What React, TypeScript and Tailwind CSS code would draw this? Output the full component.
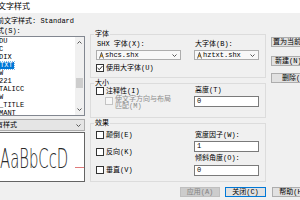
import React from 'react';

const styleNames = ['DU', 'C', 'DIX', 'TXT', 'W', '221', 'TALICC', 'W', '_TITLE', 'MANT'];

const Chevron = ({ up }: { up?: boolean }) => (
    <svg width="5" height="3" viewBox="0 0 5 3" className="block">
        <path d={up ? 'M0.5 2.5 L2.5 0.5 L4.5 2.5' : 'M0.5 0.5 L2.5 2.5 L4.5 0.5'} stroke="#555" fill="none" strokeWidth="1" />
    </svg>
);

// small SHX font mark shown in the font combo boxes
const ShxIcon = () => (
    <svg width="5" height="7" viewBox="0 0 5 7" className="block shrink-0">
        <path d="M1.2 5 L2.5 2 L3.8 5 Z" fill="#e59a1c" />
        <path d="M2.5 0.5 L0.5 6.5 M2.5 0.5 L4.5 6.5" stroke="#333" strokeWidth="0.8" fill="none" />
    </svg>
);

const Box = ({ checked, disabled }: { checked?: boolean; disabled?: boolean }) => (
    <span
        className={
            disabled
                ? 'w-[8px] h-[8px] shrink-0 border border-[#c4c4c4] bg-[#f7f7f7]'
                : 'w-[8px] h-[8px] shrink-0 border border-[#333333] bg-white flex items-center justify-center'
        }
    >
        {checked && (
            <svg width="6" height="6" viewBox="0 0 6 6" className="block">
                <path d="M0.6 3 L2.3 4.7 L5.4 1.1" stroke="#222" fill="none" strokeWidth="1" />
            </svg>
        )}
    </span>
);

const Check = ({ label, checked }: { label: string; checked?: boolean }) => (
    <div className="h-[8px] flex items-center gap-[2px] whitespace-nowrap">
        <Box checked={checked} />
        <span>{label}</span>
    </div>
);

const Combo = ({ value }: { value: string }) => (
    <div className="h-[10px] bg-[#f8f8f8] border border-[#adadad] flex items-center pl-[2px] pr-[3px] gap-px">
        <ShxIcon />
        <span className="whitespace-nowrap">{value}</span>
        <span className="ml-auto">
            <Chevron />
        </span>
    </div>
);

const Field = ({ value }: { value: string }) => (
    <div className="h-[11px] bg-white border border-[#7a7a7a] flex items-center pl-[2px]">{value}</div>
);

const Group = ({ title, className, children }: { title: string; className: string; children: React.ReactNode }) => (
    <div className={`relative border border-[#dcdcdc] ${className}`}>
        <span className="absolute -top-[4px] left-[3px] px-px bg-[#f0f0f0]">{title}</span>
        {children}
    </div>
);

export default function App() {
    return (
        <div className="w-[300px] h-[200px] overflow-hidden bg-[#f0f0f0] text-black text-[7px] leading-none font-['Liberation_Mono','Noto_Sans_CJK_SC',monospace] flex flex-col">
            {/* title bar */}
            <div className="h-[13px] shrink-0 bg-white pt-[2px] text-[8px] font-['Noto_Sans_CJK_SC',sans-serif]">
                <span className="block -ml-[2px] whitespace-nowrap">文字样式</span>
            </div>

            <div className="mt-[4px] h-[8px] shrink-0 flex items-center -ml-[10px] whitespace-nowrap">当前文字样式: Standard</div>

            <div className="mt-[2px] h-[155px] shrink-0 flex">
                {/* styles list + preview */}
                <div className="w-[85px] shrink-0 flex flex-col">
                    <div className="h-[8px] flex items-center -ml-[10px] whitespace-nowrap">样式(S):</div>
                    <div className="mt-px h-[80px] bg-white border-y border-r border-[#828790] flex overflow-hidden">
                        <div className="flex-1 flex flex-col">
                            {styleNames.map((name, i) => (
                                <div key={i} className="h-[8px] shrink-0 flex items-center whitespace-nowrap">
                                    {name === 'TXT' ? (
                                        <span className="h-[7px] flex items-center bg-[#0078d7] text-white pr-px outline outline-1 outline-dotted outline-[#7fb8e8]">
                                            TXT
                                        </span>
                                    ) : (
                                        <span className="-ml-px">{name}</span>
                                    )}
                                </div>
                            ))}
                        </div>
                        <div className="w-[9px] shrink-0 bg-[#f0f0f0] flex flex-col items-center">
                            <span className="mt-[4px]">
                                <Chevron up />
                            </span>
                            <div className="mt-[34px] w-[7px] h-[10px] bg-[#cdcdcd]" />
                            <span className="mt-auto mb-[4px]">
                                <Chevron />
                            </span>
                        </div>
                    </div>
                    <div className="mt-[3px] h-[12px] bg-[#e5e5e5] border-y border-r border-[#adadad] flex items-center pr-[3px]">
                        <span className="-ml-[11px] whitespace-nowrap">所有样式</span>
                        <span className="ml-auto">
                            <Chevron />
                        </span>
                    </div>
                    <div className="mt-px flex-1 bg-white border-y border-r border-[#646464] flex items-start overflow-hidden">
                        <div className="w-[68px] shrink-0 mt-[13px]">
                            <span className="block origin-left scale-x-[0.57] text-[26px] leading-none font-extralight text-[#2a2a2a] font-['DejaVu_Sans',sans-serif] whitespace-nowrap">
                                AaBbCcD
                            </span>
                        </div>
                        <div className="ml-auto mt-[34px] w-[9px] h-px bg-[#e07a7a]" />
                    </div>
                </div>

                {/* font / size / effects */}
                <div className="ml-[5px] w-[176px] shrink-0 flex flex-col">
                    <Group title="字体" className="mt-[7px] h-[44px]">
                        <div className="pl-[5px] pt-[5px] flex gap-[13px]">
                            <div className="w-[85px] flex flex-col">
                                <div className="h-[8px] flex items-center pl-px whitespace-nowrap">SHX 字体(X):</div>
                                <div className="mt-[2px]">
                                    <Combo value="shcs.shx" />
                                </div>
                                <div className="mt-[4px]">
                                    <Check label="使用大字体(U)" checked />
                                </div>
                            </div>
                            <div className="w-[65px] flex flex-col">
                                <div className="h-[8px] flex items-center pl-px whitespace-nowrap">大字体(B):</div>
                                <div className="mt-[2px]">
                                    <Combo value="hztxt.shx" />
                                </div>
                            </div>
                        </div>
                    </Group>

                    <Group title="大小" className="mt-[5px] h-[35px]">
                        <div className="pl-[5px] pt-[3px] flex gap-[13px]">
                            <div className="w-[85px] flex flex-col">
                                <Check label="注释性(I)" />
                                <div className="mt-[2px] pl-[9px] flex items-start gap-[2px]">
                                    <Box disabled />
                                    <div className="text-[#8d8d8d] leading-[7px] -mt-px whitespace-nowrap">
                                        <div>使文字方向与布局</div>
                                        <div>匹配(M)</div>
                                    </div>
                                </div>
                            </div>
                            <div className="w-[65px] flex flex-col -mt-px">
                                <div className="h-[8px] flex items-center pl-px whitespace-nowrap">高度(T)</div>
                                <div className="mt-[2px]">
                                    <Field value="0" />
                                </div>
                            </div>
                        </div>
                    </Group>

                    <Group title="效果" className="mt-[5px] h-[59px]">
                        <div className="pl-[5px] pt-[7px] flex gap-[13px]">
                            <div className="w-[85px] flex flex-col">
                                <Check label="颠倒(E)" />
                                <div className="mt-[9px]">
                                    <Check label="反向(K)" />
                                </div>
                                <div className="mt-[10px]">
                                    <Check label="垂直(V)" />
                                </div>
                            </div>
                            <div className="w-[65px] flex flex-col">
                                <div className="h-[8px] flex items-center pl-px whitespace-nowrap">宽度因子(W):</div>
                                <div className="mt-[2px]">
                                    <Field value="1" />
                                </div>
                                <div className="mt-[2px] h-[8px] flex items-center pl-px whitespace-nowrap">倾斜角度(O):</div>
                                <div className="mt-[3px]">
                                    <Field value="0" />
                                </div>
                            </div>
                        </div>
                    </Group>
                </div>

                {/* side buttons */}
                <div className="ml-[5px] w-[50px] shrink-0 flex flex-col">
                    <button className="mt-[10px] h-[10px] bg-[#e1e1e1] border border-[#adadad] text-left pl-[1px] whitespace-nowrap">置为当前(C)</button>
                    <button className="mt-[9px] h-[10px] bg-[#e1e1e1] border border-[#adadad] text-left pl-[3px] whitespace-nowrap">新建(N)...</button>
                    <button className="mt-[7px] h-[10px] bg-[#e1e1e1] border border-[#adadad] text-left pl-[10px] whitespace-nowrap">删除(D)</button>
                </div>
            </div>

            {/* bottom buttons */}
            <div className="mt-[5px] h-[10px] shrink-0 flex pl-[180px]">
                <button className="w-[40px] shrink-0 bg-[#cccccc] border border-[#bfbfbf] text-[#838383] whitespace-nowrap">应用(A)</button>
                <button className="ml-[5px] w-[41px] shrink-0 bg-[#e1e1e1] border border-[#0078d7] whitespace-nowrap">关闭(C)</button>
                <button className="ml-[6px] w-[41px] shrink-0 bg-[#e1e1e1] border border-[#adadad] whitespace-nowrap">帮助(H)</button>
            </div>
        </div>
    );
}
